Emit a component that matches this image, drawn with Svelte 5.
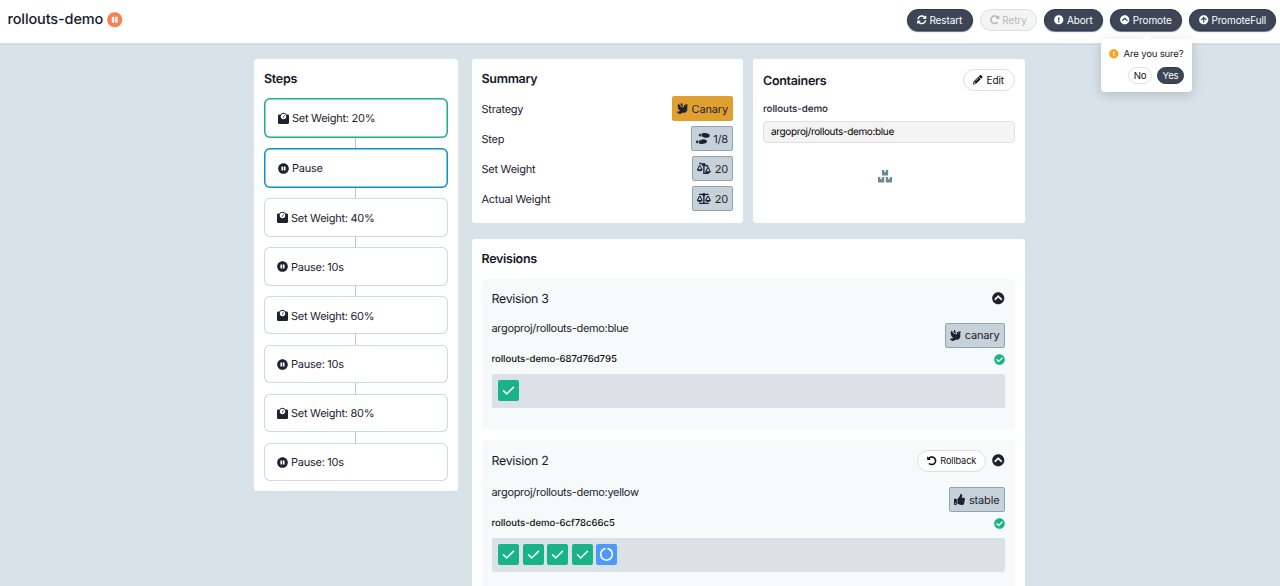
<script lang="ts">
  const icons: Record<string, { w?: number; d: string }> = {
    weight: { d: 'M64 64h48A176 176 0 0 1 400 64h48q64 0 64 64v320q0 64-64 64H64q-64 0-64-64V128q0-64 64-64zM256 34a126 126 0 1 0 0 252a126 126 0 1 0 0-252zM232 206L290 92l24 11L270 220z' },
    pause: { d: 'M256 8C119 8 8 119 8 256s111 248 248 248 248-111 248-248S393 8 256 8zm-16 328c0 8.8-7.2 16-16 16h-48c-8.8 0-16-7.2-16-16V176c0-8.8 7.2-16 16-16h48c8.8 0 16 7.2 16 16v160zm112 0c0 8.8-7.2 16-16 16h-48c-8.8 0-16-7.2-16-16V176c0-8.8 7.2-16 16-16h48c8.8 0 16 7.2 16 16v160z' },
    dove: { d: 'M288 167.2v-28.1c-28.2-36.3-47.1-79.3-54.1-125.2-2.1-13.5-19-18.8-27.8-8.3-21.1 24.9-37.7 54.1-48.9 86.5 34.2 38.3 80 64.6 130.8 75.1zM400 64c-44.2 0-80 35.9-80 80.1v59.4C215.6 197.3 127 133 87 41.8c-5.5-12.5-23.2-13.2-29-.9C41.4 76 32 115.2 32 156.6c0 70.8 34.1 136.9 85.1 185.9 13.2 12.7 26.1 23.2 38.9 32.8l-143.9 36C1.4 414-3.4 426.4 2.6 435.7 20 462.6 63 508.2 155.8 512c8 .3 16-2.6 22.1-7.9l65.2-56.1H320c88.4 0 160-71.5 160-159.9V128l32-64H400zm0 96.1c-8.8 0-16-7.2-16-16s7.2-16 16-16 16 7.2 16 16-7.2 16-16 16z' },
    shoes: { w: 640, d: 'M192 160h32V32h-32c-35.35 0-64 28.65-64 64s28.65 64 64 64zM0 416c0 35.35 28.65 64 64 64h32V352H64c-35.35 0-64 28.65-64 64zm337.46-128c-34.91 0-76.16 13.12-104.73 32-24.79 16.38-44.52 32-104.73 32v128l57.53 15.97c26.21 7.28 53.01 13.12 80.31 15.05 32.69 2.31 65.6.67 97.58-6.2C472.9 481.3 512 429.22 512 384c0-64-84.18-96-174.54-96zM491.42 7.25C459.44.32 426.53-1.33 393.84.99c-27.3 1.93-54.1 7.77-80.31 15.04L256 32v128c60.2 0 79.94 15.62 104.73 32 28.57 18.88 69.82 32 104.73 32C555.82 224 640 192 640 128c0-45.22-39.1-97.3-148.58-120.75z' },
    scale: { w: 640, d: 'M256 336h-.02c0-16.18 1.34-8.73-85.05-181.51-17.65-35.29-68.19-35.36-85.87 0C-2.06 328.75.02 320.33.02 336H0c0 44.18 57.31 80 128 80s128-35.82 128-80zM128 176l72 144H56l72-144zm511.98 160c0-16.18 1.34-8.73-85.05-181.51-17.65-35.29-68.19-35.36-85.87 0-87.12 174.26-85.04 165.84-85.04 181.51H384c0 44.18 57.31 80 128 80s128-35.82 128-80h-.02zM440 320l72-144 72 144H440zm88 128H352V153.25c23.51-10.29 41.16-31.48 46.39-57.25H528c8.84 0 16-7.16 16-16V48c0-8.84-7.16-16-16-16H383.64C369.04 12.68 346.09 0 320 0s-49.04 12.68-63.64 32H112c-8.84 0-16 7.16-16 16v32c0 8.84 7.16 16 16 16h129.61c5.23 25.76 22.87 46.96 46.39 57.25V448H112c-8.84 0-16 7.16-16 16v32c0 8.84 7.16 16 16 16h416c8.84 0 16-7.16 16-16v-32c0-8.84-7.16-16-16-16z' },
    scaleRight: { w: 640, d: 'M256 304h-.02c0-16.18 1.34-8.73-85.05-181.51-17.65-35.29-68.19-35.36-85.87 0C-2.06 296.75.02 288.33.02 304H0c0 44.18 57.31 80 128 80s128-35.82 128-80zM128 144l72 144H56l72-144zm511.98 256c0-16.18 1.34-8.73-85.05-181.51-17.65-35.29-68.19-35.36-85.87 0-87.12 174.26-85.04 165.84-85.04 181.51H384c0 44.18 57.31 80 128 80s128-35.82 128-80h-.02zM440 384l72-144 72 144H440zM288 153v343c0 9 7 16 16 16h224c9 0 16-7 16-16v-32c0-9-7-16-16-16H352V153c9-4 17-10 24-16l130 44c8 3 17-2 20-10l10-30c3-8-2-17-10-20L400 78C399 35 363 0 320 0c-22 0-42 9-57 24L134-19c-8-3-17 2-20 10l-10 30c-3 8 2 17 10 20l127 43c1 31 19 57 47 69z' },
    boxes: { w: 576, d: 'M560 288h-80v96l-32-21.3-32 21.3v-96h-80c-8.8 0-16 7.2-16 16v192c0 8.8 7.2 16 16 16h224c8.8 0 16-7.2 16-16V304c0-8.8-7.2-16-16-16zm-384-64h224c8.8 0 16-7.2 16-16V16c0-8.8-7.2-16-16-16h-80v96l-32-21.3L256 96V0h-80c-8.8 0-16 7.2-16 16v192c0 8.8 7.2 16 16 16zm64 64h-80v96l-32-21.3L96 384v-96H16c-8.8 0-16 7.2-16 16v192c0 8.8 7.2 16 16 16h224c8.8 0 16-7.2 16-16V304c0-8.8-7.2-16-16-16z' },
    thumb: { d: 'M104 224H24c-13.255 0-24 10.745-24 24v240c0 13.255 10.745 24 24 24h80c13.255 0 24-10.745 24-24V248c0-13.255-10.745-24-24-24zM64 472c-13.255 0-24-10.745-24-24s10.745-24 24-24 24 10.745 24 24-10.745 24-24 24zM384 81.452c0 42.416-25.97 66.208-33.277 94.548h101.723c33.397 0 59.397 27.746 59.553 58.098.084 17.938-7.546 37.249-19.439 49.197l-.11.11c9.836 23.337 8.237 56.037-9.308 79.469 8.681 25.895-.069 57.704-16.382 74.757 4.298 17.598 2.244 32.575-6.148 44.632C440.202 511.587 389.616 512 346.839 512l-2.845-.001c-48.287-.017-87.806-17.598-119.56-31.725-15.957-7.099-36.821-15.887-52.651-16.178-6.54-.12-11.783-5.457-11.783-11.998v-213.77c0-3.2 1.282-6.271 3.558-8.521 39.614-39.144 56.648-80.587 89.117-113.111 14.804-14.832 20.188-37.236 25.393-58.902C282.515 39.293 291.817 0 312 0c24 0 72 8 72 81.452z' },
    undo: { d: 'M255.545 8c-66.269.119-126.438 26.233-170.86 68.685L48.971 40.971C33.851 25.851 8 36.559 8 57.941V192c0 13.255 10.745 24 24 24h134.059c21.382 0 32.09-25.851 16.971-40.971l-41.75-41.75c30.864-28.899 70.801-44.907 113.23-45.273 92.398-.798 170.283 73.977 169.484 169.442C423.236 348.009 349.816 424 256 424c-41.127 0-79.997-14.678-110.63-41.556-4.743-4.161-11.906-3.908-16.368.553L89.34 422.659c-4.872 4.872-4.631 12.815.482 17.433C133.798 479.813 192.074 504 256 504c136.966 0 247.999-111.033 248-247.998C504.001 119.193 392.354 7.755 255.545 8z' },
    sync: { d: 'M370.72 133.28C339.458 104.008 298.888 87.962 255.848 88c-77.458.068-144.328 53.178-162.791 126.85-1.344 5.363-6.122 9.15-11.651 9.15H24.103c-7.498 0-13.194-6.807-11.807-14.176C33.933 94.924 134.813 8 256 8c66.448 0 126.791 26.136 171.315 68.685L463.03 40.97C478.149 25.851 504 36.559 504 57.941V192c0 13.255-10.745 24-24 24H345.941c-21.382 0-32.09-25.851-16.971-40.971l41.75-41.749zM32 296h134.059c21.382 0 32.09 25.851 16.971 40.971l-41.75 41.75c31.262 29.273 71.835 45.319 114.876 45.28 77.418-.07 144.315-53.144 162.787-126.849 1.344-5.363 6.122-9.15 11.651-9.15h57.304c7.498 0 13.194 6.807 11.807 14.176C478.067 417.076 377.187 504 256 504c-66.448 0-126.791-26.136-171.315-68.685L48.97 471.03C33.851 486.149 8 475.441 8 454.059V320c0-13.255 10.745-24 24-24z' },
    alert: { d: 'M504 256c0 136.997-111.043 248-248 248S8 392.997 8 256C8 119.083 119.043 8 256 8s248 111.083 248 248zm-248 50c-25.405 0-46 20.595-46 46s20.595 46 46 46 46-20.595 46-46-20.595-46-46-46zm-43.673-165.346l7.418 136c.347 6.364 5.609 11.346 11.982 11.346h48.546c6.373 0 11.635-4.982 11.982-11.346l7.418-136c.375-6.874-5.098-12.654-11.982-12.654h-63.383c-6.884 0-12.356 5.78-11.981 12.654z' },
    chevron: { d: 'M8 256C8 119 119 8 256 8s248 111 248 248-111 248-248 248S8 393 8 256zm231-113.9L103.5 277.6c-9.4 9.4-9.4 24.6 0 33.9l17 17c9.4 9.4 24.6 9.4 33.9 0L256 226.9l101.6 101.6c9.4 9.4 24.6 9.4 33.9 0l17-17c9.4-9.4 9.4-24.6 0-33.9L273 142.1c-9.4-9.4-24.6-9.4-34 0z' },
    arrow: { d: 'M8 256C8 119 119 8 256 8s248 111 248 248-111 248-248 248S8 393 8 256zm143.6 28.9l72.4-75.5V392c0 13.3 10.7 24 24 24h16c13.3 0 24-10.7 24-24V209.4l72.4 75.5c9.3 9.7 24.8 9.9 34.3.4l10.9-11c9.4-9.4 9.4-24.6 0-33.9L273 107.7c-9.4-9.4-24.6-9.4-33.9 0L106.3 240.4c-9.4 9.4-9.4 24.6 0 33.9l10.9 11c9.6 9.5 25.1 9.3 34.4-.4z' },
    checkCircle: { d: 'M504 256c0 136.967-111.033 248-248 248S8 392.967 8 256 119.033 8 256 8s248 111.033 248 248zM227.314 387.314l184-184c6.248-6.248 6.248-16.379 0-22.627l-22.627-22.627c-6.248-6.249-16.379-6.249-22.628 0L216 308.118l-70.059-70.059c-6.248-6.248-16.379-6.248-22.628 0l-22.627 22.627c-6.248 6.248-6.248 16.379 0 22.627l104 104c6.249 6.249 16.379 6.249 22.628.001z' },
    pencil: { d: 'M497.9 142.1l-46.1 46.1c-4.7 4.7-12.3 4.7-17 0l-111-111c-4.7-4.7-4.7-12.3 0-17l46.1-46.1c18.7-18.7 49.1-18.7 67.9 0l60.1 60.1c18.8 18.7 18.8 49.1 0 67.9zM284.2 99.8L21.6 362.4.4 483.9c-2.9 16.4 11.4 30.6 27.8 27.8l121.5-21.3 262.6-262.6c4.7-4.7 4.7-12.3 0-17l-111-111c-4.8-4.7-12.4-4.7-17.1 0zM124.1 339.9c-5.5-5.5-5.5-14.3 0-19.8l154-154c5.5-5.5 14.3-5.5 19.8 0s5.5 14.3 0 19.8l-154 154c-5.5 5.5-14.3 5.5-19.8 0zM88 424h48v36.3l-64.5 11.3-31.1-31.1L51.7 376H88v48z' }
  };

  let confirmOpen = $state(true);
  let collapsed = $state<Record<number, boolean>>({});

  const steps = [
    { icon: 'weight', label: 'Set Weight: 20%', state: 'complete' },
    { icon: 'pause', label: 'Pause', state: 'current' },
    { icon: 'weight', label: 'Set Weight: 40%' },
    { icon: 'pause', label: 'Pause: 10s' },
    { icon: 'weight', label: 'Set Weight: 60%' },
    { icon: 'pause', label: 'Pause: 10s' },
    { icon: 'weight', label: 'Set Weight: 80%' },
    { icon: 'pause', label: 'Pause: 10s' }
  ];

  const summary = [
    { label: 'Strategy', icon: 'dove', value: 'Canary', canary: true },
    { label: 'Step', icon: 'shoes', value: '1/8' },
    { label: 'Set Weight', icon: 'scaleRight', value: '20' },
    { label: 'Actual Weight', icon: 'scale', value: '20' }
  ];

  const revisions = [
    { number: 3, image: 'argoproj/rollouts-demo:blue', icon: 'dove', tag: 'canary', rs: 'rollouts-demo-687d76d795', pods: ['ok'] },
    { number: 2, image: 'argoproj/rollouts-demo:yellow', icon: 'thumb', tag: 'stable', rs: 'rollouts-demo-6cf78c66c5', pods: ['ok', 'ok', 'ok', 'ok', 'pending'], rollback: true }
  ];
</script>

{#snippet icon(name: string)}
  <svg class="icon" viewBox="0 0 {icons[name].w ?? 512} 512" fill="currentColor" aria-hidden="true">
    <path d={icons[name].d}></path>
  </svg>
{/snippet}

<div class="page">
  <header class="header">
    <h1>rollouts-demo <span class="status">{@render icon('pause')}</span></h1>
    <div class="actions">
      <button class="btn dark restart">{@render icon('sync')}Restart</button>
      <button class="btn retry" disabled><span class="flip">{@render icon('undo')}</span>Retry</button>
      <button class="btn dark abort">{@render icon('alert')}Abort</button>
      <div class="promote-wrap">
        <button class="btn dark promote" onclick={() => confirmOpen = !confirmOpen}>{@render icon('chevron')}Promote</button>
        {#if confirmOpen}
          <div class="popover">
            <div class="question">{@render icon('alert')}Are you sure?</div>
            <div class="answers">
              <button class="small" onclick={() => confirmOpen = false}>No</button>
              <button class="small yes" onclick={() => confirmOpen = false}>Yes</button>
            </div>
          </div>
        {/if}
      </div>
      <button class="btn dark full">{@render icon('arrow')}PromoteFull</button>
    </div>
  </header>

  <main class="body">
    <section class="card steps">
      <h3>Steps</h3>
      {#each steps as step, i}
        {#if i > 0}<div class="connector"></div>{/if}
        <div class="step {step.state ?? ''}">{@render icon(step.icon)}{step.label}</div>
      {/each}
    </section>

    <div class="right">
      <div class="row">
        <section class="card info">
          <h3>Summary</h3>
          {#each summary as item}
            <div class="summary-item">
              <span>{item.label}</span>
              <span class="tag" class:gold={item.canary}>{@render icon(item.icon)}{item.value}</span>
            </div>
          {/each}
        </section>

        <section class="card info">
          <div class="containers-head">
            <h3>Containers</h3>
            <button class="btn edit">{@render icon('pencil')}Edit</button>
          </div>
          <div class="container-name">rollouts-demo</div>
          <div class="image-input">argoproj/rollouts-demo:blue</div>
          <div class="boxes">{@render icon('boxes')}</div>
        </section>
      </div>

      <section class="card revisions">
        <h3>Revisions</h3>
        {#each revisions as rev}
          <article class="revision">
            <div class="rev-head" class:with-rollback={rev.rollback}>
              <span>Revision {rev.number}</span>
              <div class="rev-actions">
                {#if rev.rollback}
                  <button class="btn rollback">{@render icon('undo')}Rollback</button>
                {/if}
                <button class="toggle" aria-label="Toggle revision" onclick={() => collapsed[rev.number] = !collapsed[rev.number]}>
                  {@render icon('chevron')}
                </button>
              </div>
            </div>
            {#if !collapsed[rev.number]}
              <div class="rev-image">
                <span>{rev.image}</span>
                <span class="tag">{@render icon(rev.icon)}{rev.tag}</span>
              </div>
              <div class="rs-head">
                <span>{rev.rs}</span>
                <span class="healthy">{@render icon('checkCircle')}</span>
              </div>
              <div class="pods">
                {#each rev.pods as pod}
                  <div class="pod {pod}">
                    <svg viewBox="0 0 20 20" fill="none" stroke="#fff">
                      {#if pod === 'ok'}
                        <path d="M4.9 9.9l3.4 3.4 6.9-6.7" stroke-width="1.5"></path>
                      {:else}
                        <path d="M11.5 4.4a5.6 5.6 0 1 1-3 0" stroke-width="1.5" stroke-linecap="round"></path>
                      {/if}
                    </svg>
                  </div>
                {/each}
              </div>
            {/if}
          </article>
        {/each}
      </section>
    </div>
  </main>
</div>

<style>
  :global(body) {
    margin: 0;
    overflow: hidden;
  }

  .page {
    height: 586px;
    overflow: hidden;
    background: #dae2e9;
    color: #1c2230;
    font-family: Inter, sans-serif;
    font-size: 11px;
    letter-spacing: -0.26px;
    text-rendering: geometricPrecision;
  }

  .page,
  .page * {
    box-sizing: border-box;
  }

  .icon {
    display: block;
    flex: none;
    height: 1em;
    overflow: visible;
  }

  h1,
  h3 {
    margin: 0;
    color: #15192a;
  }

  button {
    font-family: inherit;
    letter-spacing: inherit;
    margin: 0;
    cursor: pointer;
  }

  .header {
    display: flex;
    align-items: flex-start;
    justify-content: space-between;
    height: 44px;
    padding: 9px 4px 0 7.5px;
    background: #fff;
    border-bottom: 1px solid #dde3e8;
    box-shadow: 0 1px 0 #ccd6dd;
  }

  h1 {
    display: flex;
    align-items: center;
    gap: 3.5px;
    height: 21px;
    font-size: 14.5px;
    font-weight: 500;
    letter-spacing: -0.12px;
    line-height: 21px;
  }

  .status {
    color: #fc7e56;
    font-size: 15.5px;
  }

  .actions {
    display: flex;
    gap: 7px;
  }

  .btn {
    display: flex;
    align-items: center;
    justify-content: center;
    gap: 3px;
    height: 22px;
    padding: 0;
    border: 1px solid #dcdfe2;
    border-radius: 11px;
    background: #fff;
    color: #111;
    font-size: 10px;
    letter-spacing: -0.12px;
  }

  .btn .icon {
    font-size: 9.5px;
  }

  .dark {
    border-color: #303948;
    background: #3d4656;
    color: #fff;
    box-shadow: 0 1px 1px #67707c;
  }

  .restart { width: 66px; }
  .retry { width: 57.5px; background: #f4f4f4; color: #b9b9b9; }
  .abort { width: 59px; }
  .promote { width: 72px; }
  .full { width: 87px; }

  .flip {
    transform: scaleX(-1);
  }

  .promote-wrap {
    position: relative;
  }

  .popover {
    position: absolute;
    top: 30px;
    right: -10px;
    z-index: 2;
    width: 91px;
    height: 53px;
    padding: 9px 8px 0;
    border-radius: 4px;
    background: #fff;
    box-shadow: 0 3px 12px rgba(30, 45, 60, 0.2);
    color: #1d1d1d;
    font-size: 9.6px;
    letter-spacing: -0.2px;
  }

  .popover::before {
    content: '';
    position: absolute;
    top: -3px;
    left: 42px;
    width: 7px;
    height: 7px;
    background: #fff;
    transform: rotate(45deg);
  }

  .question {
    display: flex;
    align-items: center;
    gap: 5px;
    height: 12px;
    line-height: 13px;
    white-space: nowrap;
  }

  .question .icon {
    color: #faa21b;
  }

  .answers {
    display: flex;
    justify-content: flex-end;
    gap: 5px;
    margin-top: 7px;
  }

  .small {
    width: 24px;
    height: 17px;
    padding: 0;
    border: 1px solid #dcdfe2;
    border-radius: 9px;
    background: #fff;
    color: #111;
    font-size: 9.6px;
    line-height: 14px;
  }

  .yes {
    width: 27px;
    border-color: #303948;
    background: #3d4656;
    color: #fff;
  }

  .body {
    display: flex;
    align-items: flex-start;
    gap: 14px;
    padding: 15px 0 0 254px;
  }

  .card {
    border-radius: 3px;
    background: #fff;
    padding: 10px;
  }

  h3 {
    height: 19px;
    font-size: 12.5px;
    font-weight: 600;
    letter-spacing: -0.3px;
    line-height: 21px;
  }

  .steps {
    width: 203.5px;
    height: 432px;
  }

  .steps h3 {
    margin-bottom: 10px;
  }

  .step {
    display: flex;
    align-items: center;
    gap: 3.5px;
    height: 38.3px;
    padding: 0.5px 0 0 12.5px;
    border-radius: 6px;
    box-shadow: inset 0 0 0 1px #ced8df;
  }

  .step.complete,
  .step.current {
    height: 39.7px;
    padding-left: 13.5px;
    box-shadow: inset 0 0 0 1.5px #1bb083;
  }

  .step.current {
    box-shadow: inset 0 0 0 1.5px #0e8fd2;
  }

  .connector {
    width: 1.4px;
    height: 10.55px;
    margin: 0 auto;
    background: #b9c5ce;
  }

  .right {
    width: 553px;
  }

  .row {
    display: flex;
    gap: 10px;
    margin-bottom: 16px;
  }

  .info {
    flex: 1;
    height: 164px;
  }

  .summary-item {
    display: flex;
    align-items: center;
    justify-content: space-between;
    height: 25px;
    margin-bottom: 5px;
    line-height: 12px;
  }

  .info > h3 {
    margin-bottom: 8px;
  }

  .tag {
    display: flex;
    align-items: center;
    gap: 3.5px;
    height: 25px;
    padding: 0 4px;
    border: 1px solid #8fa4b1;
    border-radius: 2px;
    background: #c7d1da;
    letter-spacing: -0.15px;
  }

  .gold {
    border-color: #dd9f30;
    background: #e0a02f;
  }

  .containers-head {
    display: flex;
    align-items: center;
    justify-content: space-between;
    margin-bottom: 11px;
  }

  .edit {
    width: 52px;
    gap: 4px;
  }

  .container-name {
    height: 14px;
    font-size: 9.8px;
    font-weight: 500;
    letter-spacing: -0.06px;
    line-height: 16px;
  }

  .image-input {
    height: 22px;
    margin-top: 5px;
    padding-left: 7px;
    border: 1px solid #dfdfdf;
    border-radius: 4px;
    background: #f4f4f4;
    color: #000;
    font-size: 10px;
    letter-spacing: -0.35px;
    line-height: 20px;
  }

  .boxes {
    display: flex;
    justify-content: center;
    margin-top: 27px;
    padding-right: 8px;
    color: #6e8899;
    font-size: 12.5px;
  }

  .revisions {
    height: 400px;
  }

  .revisions h3 {
    margin-bottom: 11px;
  }

  .revision {
    height: 150px;
    margin-bottom: 11px;
    padding: 9px 10px;
    border-radius: 3px;
    background: #f6fafa;
  }

  .revision + .revision {
    height: 170px;
  }

  .rev-head {
    display: flex;
    align-items: center;
    justify-content: space-between;
    height: 21px;
    margin-bottom: 14px;
    color: #15192a;
    font-size: 12.4px;
    letter-spacing: -0.3px;
  }

  .rev-head.with-rollback {
    height: 23px;
    margin-bottom: 15.4px;
  }

  .rev-actions {
    display: flex;
    align-items: center;
    gap: 6px;
  }

  .rollback {
    width: 69px;
    gap: 4px;
    font-size: 9.2px;
  }

  .toggle {
    padding: 0;
    border: 0;
    background: none;
    color: #1c2230;
    font-size: 12.5px;
  }

  .rev-image {
    display: flex;
    justify-content: space-between;
    height: 25px;
    line-height: 10.5px;
    letter-spacing: -0.32px;
  }

  .rs-head {
    display: flex;
    align-items: center;
    justify-content: space-between;
    height: 22px;
    color: #111;
    font-size: 9.6px;
    font-weight: 500;
    letter-spacing: -0.05px;
    line-height: 11px;
  }

  .rs-head > span:first-child {
    padding-top: 1px;
  }

  .healthy {
    color: #18b487;
    font-size: 11px;
  }

  .pods {
    display: flex;
    align-items: center;
    gap: 3.5px;
    height: 34px;
    margin-top: 3.5px;
    padding: 0 6.5px;
    border-radius: 2px;
    background: #dae2e8;
  }

  .pod {
    width: 21px;
    height: 21px;
    border-radius: 2px;
    background: #18b487;
  }

  .pod svg {
    display: block;
  }

  .pending {
    background: #4c9afb;
  }
</style>
